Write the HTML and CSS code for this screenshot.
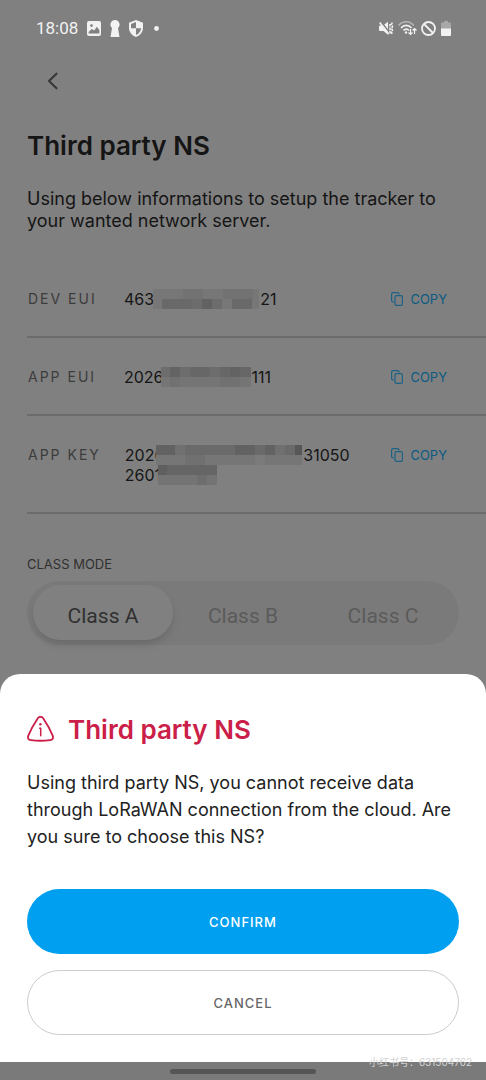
FILE: index.html
```
<!DOCTYPE html>
<html lang="en">
<head>
<meta charset="utf-8">
<meta name="viewport" content="width=device-width, initial-scale=1">
<title>Third party NS</title>
<link rel="stylesheet" href="styles.css">
</head>
<body>
<svg width="0" height="0" class="sprite" aria-hidden="true">
  <symbol id="copy" viewBox="0 0 12 14"><path d="M3 10H2a1.400 1.400 0 0 1-1.400-1.400V2A1.400 1.400 0 0 1 2 .7h4.500A1.400 1.400 0 0 1 8 2v.6" /><rect x="4" y="3.700" width="7.400" height="9.600" rx="1.400"/></symbol>
</svg>
<header class="status">
  <div class="status-group">
    <span class="clock">18:08</span>
    <svg width="14" height="15" viewBox="0 0 14 15" aria-hidden="true"><path fill="#f2f2f2" fill-rule="evenodd" d="M2 0h10a2 2 0 0 1 2 2v11a2 2 0 0 1-2 2H2a2 2 0 0 1-2-2V2a2 2 0 0 1 2-2zM1.600 12.500h10.800V9.200L9.900 5.800 7.200 9.500 4.700 7.900 1.600 11zM4.500 3.200a1.400 1.400 0 1 0 0 2.800 1.400 1.400 0 0 0 0-2.800z"/></svg>
    <svg width="10" height="17" viewBox="0 0 10 17" aria-hidden="true"><path fill="#f2f2f2" d="M5 0a4.500 4.500 0 0 1 3 7.900L9.500 17h-9L2 7.900A4.500 4.500 0 0 1 5 0z"/></svg>
    <svg width="14" height="17" viewBox="0 0 14 17" aria-hidden="true"><path fill="#f2f2f2" fill-rule="evenodd" d="M7 0l7 2.700v5.100c0 4-2.700 7.700-7 9.200-4.300-1.500-7-5.200-7-9.200V2.700zM7 2L2 3.900v4.300h5zM7 8.200V15c2.900-1.200 4.800-3.800 5-6.800z"/></svg>
    <svg width="5" height="5" viewBox="0 0 5 5" class="dot" aria-hidden="true"><circle cx="2.500" cy="2.500" r="2.400" fill="#f2f2f2"/></svg>
  </div>
  <div class="status-group status-right">
    <svg width="15" height="15" viewBox="0 0 15 15" aria-hidden="true"><path fill="#f2f2f2" d="M1 4.500h3L9 .8v13L4.500 10H1a1 1 0 0 1-1-1V5.500a1 1 0 0 1 1-1z"/><path d="M1.800.5l8 10" stroke="#808080" stroke-width="1.600"/><path d="M.7 1.500l9 11.500" stroke="#f2f2f2" stroke-width="1.600"/><path d="M11 3v10M13.300 1.500l-.8 2 1 2-1 2 1 2-1 2 .8 2" fill="none" stroke="#f2f2f2" stroke-width="1.500" stroke-dasharray="2.600 .8"/></svg>
    <svg width="19" height="16" viewBox="0 0 19 16" fill="none" aria-hidden="true"><path d="M.7 5.500c4-5 11-5 15 0" stroke="#b5b5b5" stroke-width="1.700"/><path d="M3 8c3-3.500 7.500-3.500 10.500 0M5.500 10.500c1.500-1.800 4-1.800 5.500 0" stroke="#f2f2f2" stroke-width="1.700"/><circle cx="8" cy="12.500" r="1.200" fill="#f2f2f2"/><path d="M12.500 9v5.500m-2-2l2 2 2-2M16.500 14V8.500m-2 2l2-2 2 2" stroke="#f2f2f2" stroke-width="1.200"/></svg>
    <svg width="15" height="15" viewBox="0 0 15 15" fill="none" stroke="#f2f2f2" stroke-width="1.800" aria-hidden="true"><circle cx="7.500" cy="7.500" r="6.500"/><path d="M3 3l9 9"/></svg>
    <svg width="10" height="15" viewBox="0 0 10 15" class="battery" aria-hidden="true"><path fill="#a8a8a8" d="M3 0h4v1.500h2a1 1 0 0 1 1 1V8H0V2.500a1 1 0 0 1 1-1h2z"/><path fill="#f2f2f2" d="M0 7.500h10V14a1 1 0 0 1-1 1H1a1 1 0 0 1-1-1z"/></svg>
  </div>
</header>

<main class="page">
  <button class="back" type="button" aria-label="Back"><svg width="12" height="18" viewBox="0 0 12 18" fill="none" stroke="#383838" stroke-width="2.200" stroke-linecap="round" stroke-linejoin="round" aria-hidden="true"><path d="M9.500 1.700L2 9l7.500 7.300"/></svg></button>
  <h1 class="title">Third party NS</h1>
  <p class="intro">Using below informations to setup the tracker to your wanted network server.</p>

  <dl class="keys">
    <div class="row">
      <dt>DEV EUI</dt>
      <dd><span class="line">463<svg class="mask" width="106" height="20" viewBox="0 0 106 20" aria-hidden="true"><path fill="#777" d="M0 0h106v20H0z"/><path fill="#727272" d="M30 0h20v10H30zM70 0h30v10H70z"/><path fill="#696969" d="M9 10h30v10H9zM79 10h20v10H79z"/><path fill="#6c6c6c" d="M39 10h30v10H39z"/><path fill="#626262" d="M49 10h10v10H49z"/></svg>21</span></dd>
      <dd class="action"><button class="copy" type="button"><svg width="12" height="14" aria-hidden="true"><use href="#copy"/></svg>COPY</button></dd>
    </div>
    <div class="row">
      <dt>APP EUI</dt>
      <dd><span class="line">2026<svg class="mask over" width="90" height="20" viewBox="0 0 90 20" aria-hidden="true"><path fill="#757575" d="M0 0h90v20H0z"/><path fill="#6d6d6d" d="M0 0h90v10H0z"/><path fill="#636363" d="M9 0h10v10H9zM69 0h10v10H69z"/><path fill="#676767" d="M29 0h20v10H29zM59 0h10v10H59zM79 0h11v10H79z"/><path fill="#717171" d="M9 10h10v10H9zM59 10h20v10H59z"/></svg>111</span></dd>
      <dd class="action"><button class="copy" type="button"><svg width="12" height="14" aria-hidden="true"><use href="#copy"/></svg>COPY</button></dd>
    </div>
    <div class="row">
      <dt>APP KEY</dt>
      <dd><span class="line">2026<svg class="mask overlap" width="146" height="20" viewBox="0 0 146 20" aria-hidden="true"><path fill="#767676" d="M0 0h146v20H0z"/><path fill="#6a6a6a" d="M0 0h146v10H0z"/><path fill="#626262" d="M0 0h19v10H0zM79 0h20v10H79zM109 0h10v10h-10z"/><path fill="#707070" d="M19 0h10v10H19zM119 0h10v10h-10zM29 10h20v10H29z"/><path fill="#575757" d="M139 0h7v10h-7z"/><path fill="#7b7b7b" d="M99 10h10v10H99z"/></svg>31050</span><span class="line">2601<svg class="mask over" width="59" height="20" viewBox="0 0 59 20" aria-hidden="true"><path fill="#747474" d="M0 0h59v20H0z"/><path fill="#656565" d="M0 0h59v10H0z"/><path fill="#5f5f5f" d="M0 0h9v10H0z"/><path fill="#6e6e6e" d="M39 10h10v10H39z"/></svg></span></dd>
      <dd class="action"><button class="copy" type="button"><svg width="12" height="14" aria-hidden="true"><use href="#copy"/></svg>COPY</button></dd>
    </div>
  </dl>

  <fieldset class="mode">
    <legend>CLASS MODE</legend>
    <div class="segments">
      <label class="segment"><input type="radio" name="class" checked><span>Class A</span></label>
      <label class="segment"><input type="radio" name="class"><span>Class B</span></label>
      <label class="segment"><input type="radio" name="class"><span>Class C</span></label>
    </div>
  </fieldset>
</main>

<div class="bottom">
  <section class="sheet" role="dialog" aria-labelledby="sheet-title">
    <div class="sheet-head">
      <svg width="27" height="28" viewBox="0 0 27 28" fill="none" stroke="#cb1e48" stroke-width="1.800" stroke-linecap="round" stroke-linejoin="round" aria-hidden="true"><path d="M10.800 2.200c1.300-1.800 4.100-1.800 5.400 0 3.600 5.400 7 11.400 9.500 17.500.9 2.300-.2 4.200-2.500 4.500-6.400.7-13 .7-19.400 0-2.300-.3-3.400-2.200-2.500-4.500C3.800 13.600 7.200 7.600 10.800 2.200z"/><path d="M12.700 12.200h1v7.600" stroke-width="1.500"/><circle cx="13.400" cy="8.200" r="1.200" fill="#cb1e48" stroke="none"/></svg>
      <h2 id="sheet-title">Third party NS</h2>
    </div>
    <p class="sheet-text">Using third party NS, you cannot receive data through LoRaWAN connection from the cloud. Are you sure to choose this NS?</p>
    <button class="pill confirm" type="button">CONFIRM</button>
    <button class="pill cancel" type="button">CANCEL</button>
  </section>
  <div class="navbar"><span class="handle"></span></div>
  <span class="watermark">小红书号：631504762</span>
</div>
</body>
</html>
```
FILE: styles.css
```
* { box-sizing: border-box; }
body {
  margin: 0;
  min-height: 100vh;
  background: #808080;
  color: #151515;
  font-family: Inter, "Noto Sans", sans-serif;
}
button { border: 0; background: none; padding: 0; font: inherit; cursor: pointer; }
svg { display: block; flex: none; }
h1, h2, p, dl, dd { margin: 0; }
.sprite { position: absolute; }

.status {
  display: flex;
  justify-content: space-between;
  align-items: center;
  height: 56px;
  padding: 0 35px 0 36px;
}
.status-group { display: flex; align-items: center; gap: 9px; }
.status-right { gap: 4px; }
.battery { margin-left: 1px; }
.dot { margin-left: 2px; }
.clock { font: 17px/24px Roboto, sans-serif; color: #f2f2f2; }

.page { padding-left: 27px; }
.back { display: flex; align-items: center; height: 50px; padding: 0 20px; }
.title { margin-top: 24px; font-size: 26px; line-height: 32px; font-weight: 600; }
.intro { margin: 26px 27px 0 0; font-size: 18px; line-height: 22px; }

.keys { margin-top: 28px; }
.row {
  display: flex;
  gap: 24px;
  padding: 29px 39px 27px 1px;
  border-bottom: 2px solid #6c6c6c;
  font-size: 16px;
  line-height: 20px;
}
.row dt { min-width: 72px; font-size: 14px; letter-spacing: 2px; color: #3c3c3c; }
.action { margin-left: auto; }
.line { display: flex; align-items: center; }
.mask { margin: 0 1px 0 -1px; }
.over { margin-left: -3px; }
.overlap { margin-left: -8px; }
.copy { display: flex; align-items: center; gap: 7px; font-size: 13px; line-height: 20px; color: #0b5b82; }
.copy svg { fill: none; stroke: #1b6285; stroke-width: 1.2; }

.mode { margin: 40px 27px 0 0; padding: 0; border: 0; }
.mode legend { padding: 0; font-size: 13px; line-height: 20px; color: #303030; }
.segments {
  display: flex;
  margin-top: 7px;
  padding: 4px 6px 5px;
  border-radius: 32px;
  background: #7a7a7a;
}
.segment { flex: 1; }
.segment input { position: absolute; opacity: 0; }
.segment span {
  display: block;
  padding-top: 8px;
  border-radius: 28px;
  font: 21px/47px Roboto, sans-serif;
  text-align: center;
  color: #5b5b5b;
}
.segment input:checked + span { background: #808080; color: #303030; box-shadow: 0 5px 7px -1px #6a6a6a; }

.bottom { position: fixed; left: 0; right: 0; bottom: 0; }
.sheet { padding: 40px 27px 27px; border-radius: 20px 20px 0 0; background: #fff; }
.sheet-head { display: flex; align-items: center; gap: 14px; color: #cb1e48; }
.sheet-head h2 { font-size: 26px; line-height: 32px; font-weight: 600; }
.sheet-text { margin: 23px 0 39px; font-size: 18px; line-height: 27px; color: #222; }
.pill {
  display: block;
  width: 100%;
  height: 65px;
  border-radius: 33px;
  font-size: 13px;
  font-weight: 500;
  letter-spacing: 1px;
}
.confirm { background: #019ff0; color: #fff; }
.cancel { margin-top: 16px; border: 1px solid #ccc; color: #666; }
.navbar { display: flex; justify-content: center; align-items: center; height: 18px; background: #7a7a7a; }
.handle { width: 30%; height: 5px; border-radius: 3px; background: #555; }
.watermark {
  position: absolute;
  right: 14px;
  bottom: 9px;
  font: 10px/18px Inter, "Noto Sans CJK SC", sans-serif;
  color: #d2d2d2;
}
```
